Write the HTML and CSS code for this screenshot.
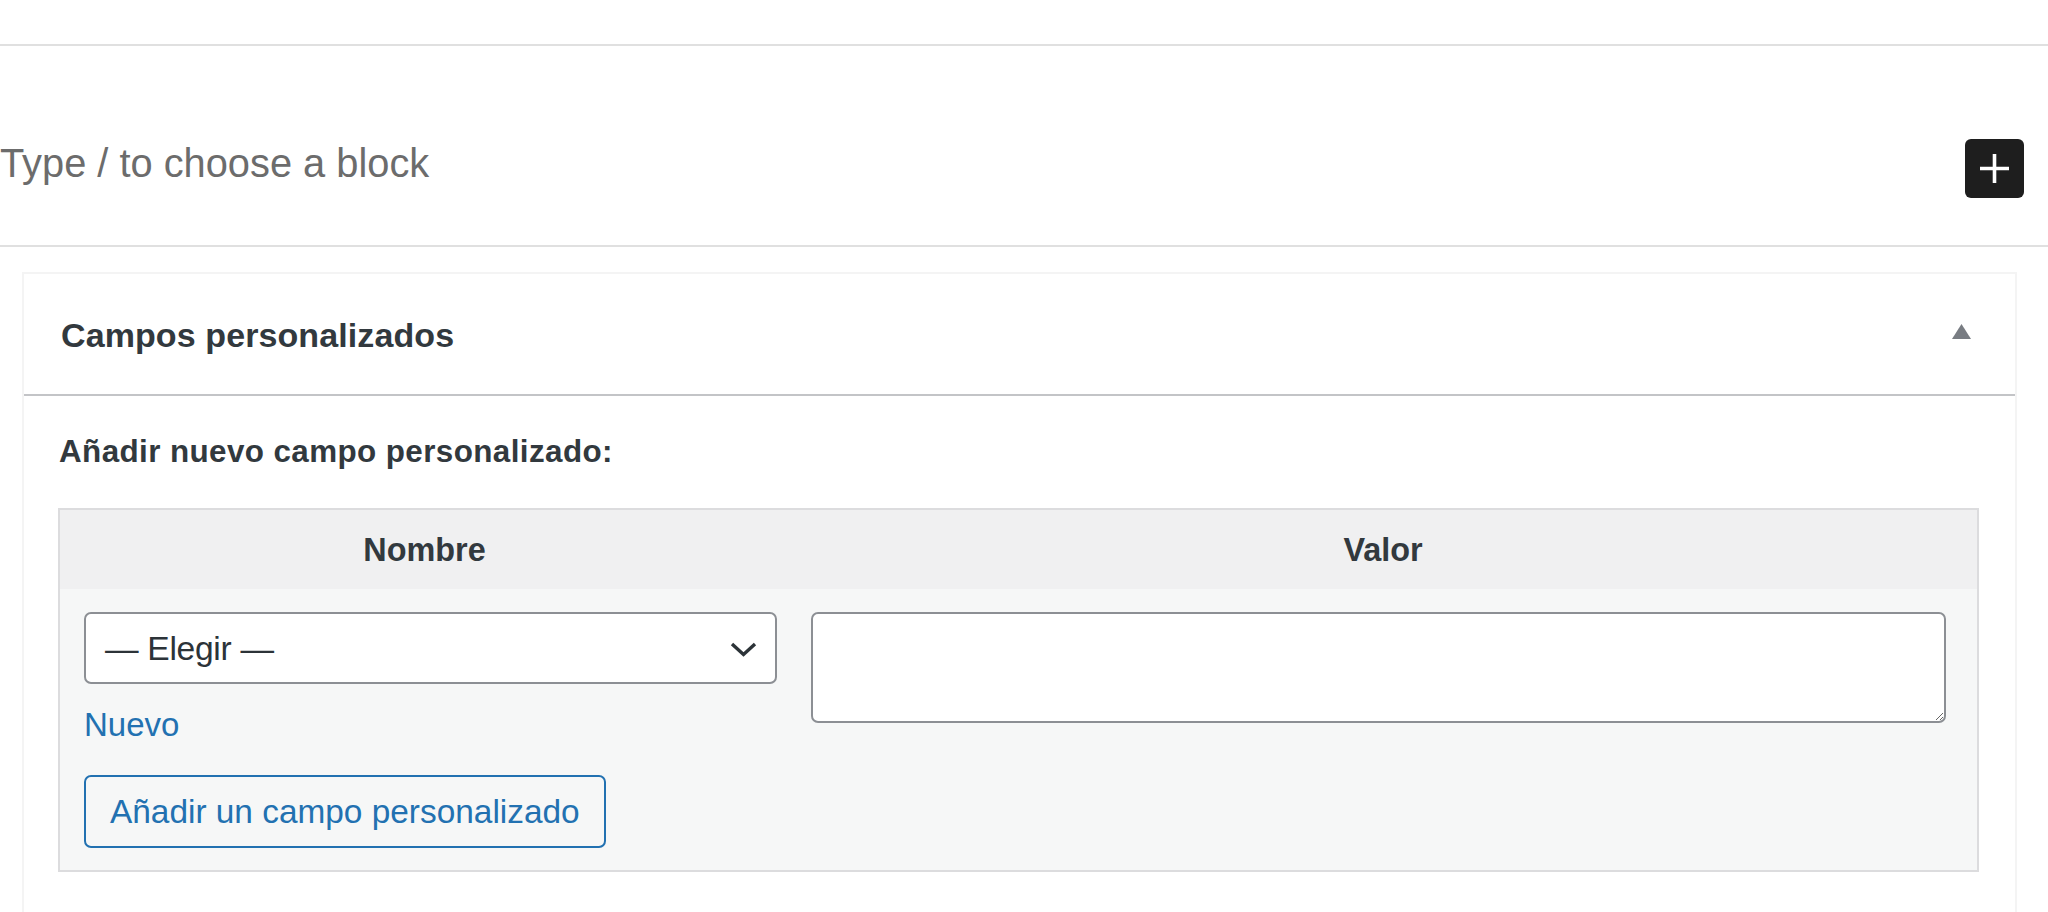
FILE: index.html
```html
<!DOCTYPE html>
<html lang="es">
<head>
<meta charset="utf-8">
<title>Campos personalizados</title>
<link rel="stylesheet" href="styles.css">
</head>
<body>
<div class="top-space"></div>
<div class="rule"></div>
<div class="block-row">
  <p class="placeholder">Type / to choose a block</p>
  <button class="inserter" type="button" aria-label="Add block">
    <svg width="59" height="59" viewBox="0 0 59 59"><path d="M29.5 15v29M15 29.5h29" stroke="#fff" stroke-width="3.6" fill="none"/></svg>
  </button>
</div>
<div class="rule"></div>

<section class="postbox">
  <div class="postbox-header">
    <h2 class="hndle">Campos personalizados</h2>
    <svg class="toggle" width="19" height="15" viewBox="0 0 19 15"><polygon points="9.5,0 19,15 0,15" fill="#787c82"/></svg>
  </div>
  <div class="inside">
    <p class="new-title"><strong>Añadir nuevo campo personalizado:</strong></p>
    <div class="meta-table">
      <div class="th">Nombre</div>
      <div class="th">Valor</div>
      <div class="td td-name">
        <div class="select">
          <span>— Elegir —</span>
          <svg width="27" height="15" viewBox="0 0 27 15"><polyline points="2,2 13.5,12.5 25,2" fill="none" stroke="#2c3338" stroke-width="3.4"/></svg>
        </div>
        <a class="new-link" href="#">Nuevo</a>
        <div><button class="btn" type="button">Añadir un campo personalizado</button></div>
      </div>
      <div class="td td-value">
        <textarea class="value"></textarea>
      </div>
    </div>
  </div>
</section>
</body>
</html>
```
FILE: styles.css
```css
* { box-sizing: border-box; }
html, body { margin: 0; padding: 0; background: #fff; }
body {
  width: 2048px;
  height: 912px;
  overflow: hidden;
  font-family: "Liberation Sans", Arial, sans-serif;
  color: #2c3338;
}

.top-space { height: 44px; }
.rule { height: 2px; background: #e0e0e0; }

.block-row {
  height: 199px;
  display: flex;
  justify-content: space-between;
  align-items: flex-start;
  padding: 93px 24px 0 0;
}
.placeholder {
  margin: 2px 0 0 0;
  font-size: 39.8px;
  line-height: 45px;
  color: #6c6c6c;
}
.inserter {
  width: 59px;
  height: 59px;
  padding: 0;
  border: 0;
  border-radius: 6px;
  background: #1e1e1e;
  display: flex;
}

.postbox {
  margin: 25px 31px 0 22px;
  border: 2px solid #f4f4f4;
  border-bottom: 0;
  height: 640px;
}
.postbox-header {
  height: 122px;
  display: flex;
  align-items: center;
  justify-content: space-between;
  padding: 0 44px 0 37px;
  border-bottom: 2px solid #c3c4c7;
}
.hndle {
  margin: 0;
  font-size: 34px;
  font-weight: 700;
  line-height: 40px;
  color: #32393e;
  letter-spacing: 0.1px;
  padding-top: 1px;
}
.toggle { margin-top: -6px; }

.inside { padding: 0 36px 0 34px; }
.new-title {
  margin: 36px 0 36px 1px;
  font-size: 31.4px;
  line-height: 40px;
  letter-spacing: 0.4px;
  color: #32393e;
}
.new-title strong { font-weight: 700; }

.meta-table {
  display: grid;
  grid-template-columns: 729px 1fr;
  border: 2px solid #dcdcde;
  background: #f6f7f7;
}
.th {
  height: 79px;
  background: #f0f0f1;
  display: flex;
  align-items: center;
  justify-content: center;
  font-size: 32.4px;
  font-weight: 700;
  padding-top: 2px;
  color: #32393e;
}
.td { padding-top: 23px; }
.td-name { padding: 23px 12px 22px 24px; }
.td-value { padding: 23px 31px 0 22px; }

.select {
  height: 72px;
  border: 2px solid #8c8f94;
  border-radius: 7px;
  background: #fff;
  display: flex;
  align-items: center;
  justify-content: space-between;
  padding: 0 18px 0 19px;
  font-size: 33.6px;
  color: #2c3338;
}
.select span { padding-top: 2px; letter-spacing: -0.3px; }
.select svg { margin-top: 2px; }

.new-link {
  display: block;
  width: max-content;
  margin-top: 21px;
  font-size: 33px;
  line-height: 40px;
  color: #2271b1;
  text-decoration: none;
}
.btn {
  margin-top: 30px;
  height: 73px;
  padding: 0 24px;
  border: 2px solid #2271b1;
  border-radius: 7px;
  background: #f6f7f7;
  color: #2271b1;
  font-family: "Liberation Sans", Arial, sans-serif;
  font-size: 33.4px;
  display: inline-flex;
  align-items: center;
}

.value {
  display: block;
  width: 100%;
  height: 111px;
  border: 2px solid #8c8f94;
  border-radius: 7px;
  background: #fff;
  resize: vertical;
  font-family: "Liberation Sans", Arial, sans-serif;
  font-size: 33px;
}
```
